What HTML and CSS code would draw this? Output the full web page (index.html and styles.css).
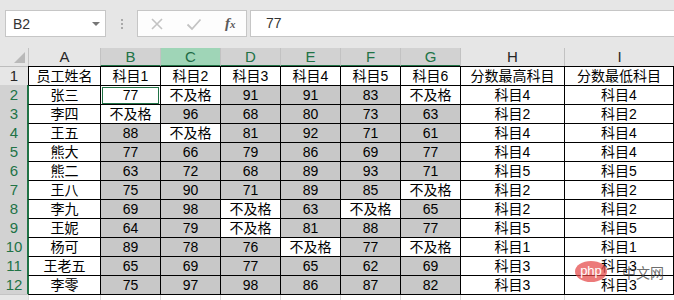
FILE: index.html
```html
<!DOCTYPE html>
<html lang="zh-CN">
<head>
    <meta charset="UTF-8">
    <title>成绩表 - Excel</title>
    <link rel="stylesheet" href="styles.css">
</head>
<body>
    <div class="toolbar">
        <div class="namebox">
            <span>B2</span>
            <span class="caret"></span>
        </div>
        <div class="grip"><i></i><i></i><i></i></div>
        <div class="fx-buttons">
            <svg width="14" height="14" viewBox="0 0 14 14"><path d="M2 2 L12 12 M12 2 L2 12" stroke="#c3c3c3" stroke-width="1.6" fill="none"/></svg>
            <svg width="16" height="14" viewBox="0 0 16 14"><path d="M1.5 7.5 L6 12 L14.5 2.5" stroke="#c3c3c3" stroke-width="1.8" fill="none"/></svg>
            <span class="fx">f<small>x</small></span>
        </div>
        <div class="formula">77</div>
    </div>

    <div class="sheet" id="sheet">
        <div class="row hdr">
            <div class="corner"><span></span></div>
            <div class="ch">A</div>
            <div class="ch sel">B</div>
            <div class="ch sel hover">C</div>
            <div class="ch sel">D</div>
            <div class="ch sel">E</div>
            <div class="ch sel">F</div>
            <div class="ch sel">G</div>
            <div class="ch">H</div>
            <div class="ch">I</div>
        </div>
    </div>

    <div class="watermark"><span class="php">php</span><span class="cn">中文网</span></div>

    <script>
        var header = ['员工姓名', '科目1', '科目2', '科目3', '科目4', '科目5', '科目6', '分数最高科目', '分数最低科目'];
        var F = '不及格';
        var data = [
            ['张三', 77, F, 91, 91, 83, F, '科目4', '科目4'],
            ['李四', F, 96, 68, 80, 73, 63, '科目2', '科目2'],
            ['王五', 88, F, 81, 92, 71, 61, '科目4', '科目4'],
            ['熊大', 77, 66, 79, 86, 69, 77, '科目4', '科目4'],
            ['熊二', 63, 72, 68, 89, 93, 71, '科目5', '科目5'],
            ['王八', 75, 90, 71, 89, 85, F, '科目2', '科目2'],
            ['李九', 69, 98, F, 63, F, 65, '科目2', '科目2'],
            ['王妮', 64, 79, F, 81, 88, 77, '科目5', '科目5'],
            ['杨可', 89, 78, 76, F, 77, F, '科目1', '科目1'],
            ['王老五', 65, 69, 77, 65, 62, 69, '科目3', '科目3'],
            ['李零', 75, 97, 98, 86, 87, 82, '科目3', '科目3']
        ];

        var sheet = document.getElementById('sheet');

        function addRow(num, values, opts) {
            var row = document.createElement('div');
            row.className = 'row' + (opts.last ? ' last' : '') + (opts.empty ? ' empty' : '');
            var rh = document.createElement('div');
            rh.className = 'rh' + (opts.sel ? ' sel' : '');
            rh.textContent = num;
            row.appendChild(rh);
            values.forEach(function (v, i) {
                var c = document.createElement('div');
                c.className = 'c';
                if (i === 0 && opts.sel) c.className += ' first-sel';
                if (i === 8) c.className += ' end';
                if (opts.score && i >= 1 && i <= 6 && typeof v === 'number') c.className += ' pass';
                if (opts.active && i === 1) c.className += ' active';
                c.textContent = v;
                row.appendChild(c);
            });
            sheet.appendChild(row);
        }

        addRow(1, header, {});
        data.forEach(function (r, i) {
            addRow(i + 2, r, { sel: true, score: true, active: i === 0, last: i === data.length - 1 });
        });
        addRow('', ['', '', '', '', '', '', '', '', ''], { empty: true });
    </script>
</body>
</html>
```

FILE: styles.css
```css
body {
    margin: 0;
    background: #e6e6e6;
    font-family: "Liberation Sans", "Noto Sans CJK SC", sans-serif;
    color: #000;
    overflow: hidden;
}
.toolbar {
    display: flex;
    align-items: center;
    height: 48px;
    padding-left: 5px;
    padding-bottom: 1px;
    box-sizing: border-box;
}
.namebox {
    box-sizing: border-box;
    width: 101px;
    height: 27px;
    background: #fff;
    border: 1px solid #c6c6c6;
    display: flex;
    align-items: center;
    justify-content: space-between;
    padding: 0 5px 0 7px;
    font-size: 14px;
    color: #333;
}
.caret {
    width: 0;
    height: 0;
    border-left: 4px solid transparent;
    border-right: 4px solid transparent;
    border-top: 4px solid #767676;
}
.grip {
    width: 31px;
    display: flex;
    flex-direction: column;
    align-items: center;
    gap: 2px;
}
.grip i {
    width: 2px;
    height: 2px;
    background: #a9a9a9;
}
.fx-buttons {
    box-sizing: border-box;
    width: 110px;
    height: 27px;
    background: #fdfdfd;
    border: 1px solid #c6c6c6;
    display: flex;
    align-items: center;
    padding-left: 12px;
    gap: 22px;
}
.fx {
    font-family: "Liberation Serif", serif;
    font-style: italic;
    font-weight: bold;
    font-size: 15px;
    color: #5a5a5a;
    margin-left: 1px;
}
.fx small {
    font-size: 11px;
}
.formula {
    flex: 1;
    box-sizing: border-box;
    height: 27px;
    margin-left: 3px;
    background: #fff;
    border: 1px solid #c6c6c6;
    border-right: none;
    padding-left: 15px;
    line-height: 25px;
    font-size: 14px;
    color: #333;
}

.sheet {
    background: #fff;
}
.row {
    display: grid;
    grid-template-columns: 28px 72px repeat(6, 60px) 104px 110px;
    height: 19px;
}
.row.last {
    height: 20px;
}
.row.hdr {
    height: 18px;
    background: #e6e6e6;
}
.corner {
    position: relative;
    border-bottom: 1px solid #bdbdbd;
}
.corner span {
    position: absolute;
    right: 3px;
    bottom: 3px;
    width: 0;
    height: 0;
    border-left: 11px solid transparent;
    border-bottom: 11px solid #b9b9b9;
}
.ch {
    box-sizing: border-box;
    border-left: 1px solid #c2c2c2;
    border-bottom: 1px solid #bdbdbd;
    text-align: center;
    font-size: 15px;
    line-height: 18px;
    color: #262626;
}
.ch.sel {
    background: #d2d2d2;
    color: #217346;
    border-bottom: 2px solid #217346;
    line-height: 17px;
}
.ch.hover {
    background: #9fd5b7;
    color: #1e6b45;
}
.rh {
    box-sizing: border-box;
    background: #e6e6e6;
    border-bottom: 1px solid #c4c4c4;
    text-align: center;
    font-size: 15px;
    line-height: 19px;
    color: #262626;
}
.rh.sel {
    background: #d2d2d2;
    color: #217346;
    box-shadow: inset -1px 0 #217346;
}
.c {
    box-sizing: border-box;
    border-top: 1px solid #000;
    border-left: 1px solid #000;
    text-align: center;
    font-size: 14px;
    line-height: 18px;
    white-space: nowrap;
    overflow: hidden;
}
.c.end {
    border-right: 1px solid #000;
}
.row.last .c {
    border-bottom: 1px solid #000;
}
.c.first-sel {
    border-left-color: #217346;
}
.c.pass {
    background: #c8c8c8;
}
.c.active {
    background: #fff;
    box-shadow: inset 0 0 0 1px #fff, inset 0 0 0 2px #217346;
}
.row.empty .c {
    border-top: none;
    border-left: 1px solid #dadada;
}
.row.empty .c.end {
    border-right: none;
}
.row.empty .rh {
    border-bottom: none;
}

.watermark {
    position: absolute;
    left: 575px;
    top: 261px;
    display: flex;
    align-items: center;
    gap: 15px;
}
.php {
    width: 32px;
    height: 21px;
    border-radius: 50%;
    background: rgba(228, 70, 70, 0.72);
    color: #fff;
    font-size: 13px;
    line-height: 19px;
    text-align: center;
}
.cn {
    font-family: "Noto Sans CJK SC", sans-serif;
    font-size: 14px;
    color: rgba(70, 70, 70, 0.8);
}
```
